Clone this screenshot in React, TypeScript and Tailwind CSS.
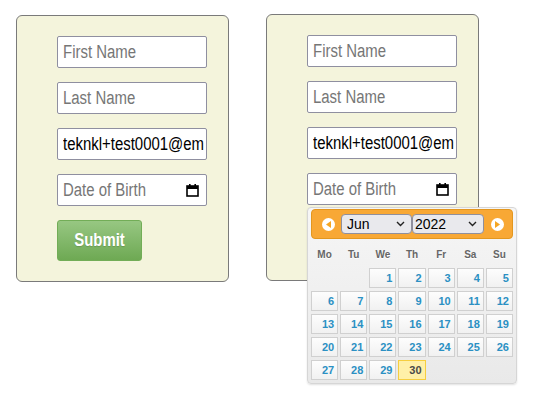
const sans = "font-['Liberation_Sans',Arial,sans-serif]";

// Arial Narrow isn't installed; Liberation Sans squeezed horizontally gives the same glyphs
function Narrow({ children, className = '' }: { children: React.ReactNode; className?: string }) {
  return <span className={`inline-block origin-left scale-x-[0.83] whitespace-nowrap ${className}`}>{children}</span>;
}

function CalendarIcon() {
  return (
    <svg className="h-[14px] w-[13px] shrink-0" viewBox="0 0 13 14" fill="none">
      <rect x="1" y="3" width="11" height="10" stroke="#000" strokeWidth="1.6" />
      <rect x="1" y="3" width="11" height="3" fill="#000" />
      <rect x="3" y="1" width="1.6" height="3" fill="#000" />
      <rect x="8.4" y="1" width="1.6" height="3" fill="#000" />
    </svg>
  );
}

function Field({ text, filled, icon }: { text: string; filled?: boolean; icon?: boolean }) {
  return (
    <div
      className={`flex h-8 w-[150px] items-center justify-between overflow-hidden rounded-[2px] border border-[#8f8fa0] bg-white pl-[5px] pr-[7px] text-[18px] ${sans} ${
        filled ? 'text-black' : 'text-[#767676]'
      }`}
    >
      <Narrow>{text}</Narrow>
      {icon && <CalendarIcon />}
    </div>
  );
}

function Chevron() {
  return (
    <svg className="h-[6px] w-[9px]" viewBox="0 0 9 6" fill="none">
      <path d="M1 1l3.5 3.5L8 1" stroke="#222" strokeWidth="1.4" />
    </svg>
  );
}

function NavButton({ dir }: { dir: 'prev' | 'next' }) {
  return (
    <div className="flex h-[13px] w-[13px] items-center justify-center rounded-full bg-white">
      <svg className="h-[7px] w-[5px]" viewBox="0 0 5 7">
        {dir === 'prev' ? <path d="M5 0v7L0 3.5z" fill="#f5a623" /> : <path d="M0 0v7l5-3.5z" fill="#f5a623" />}
      </svg>
    </div>
  );
}

function Datepicker() {
  const names = ['Mo', 'Tu', 'We', 'Th', 'Fr', 'Sa', 'Su'];
  const cells: (number | null)[] = [null, null, ...Array.from({ length: 30 }, (_, i) => i + 1)];
  return (
    <div className={`absolute left-0 top-[34px] z-10 w-[210px] rounded-[4px] border border-[#d6d6d6] bg-gradient-to-b from-[#f6f6f6] to-[#e9e9e9] px-[3px] pb-[3px] pt-px shadow-[0_1px_2px_rgba(0,0,0,0.12)] ${sans}`}>
      <div className="flex h-[30px] items-center rounded-[4px] border border-[#e3971f] bg-[#f8a835] pl-[10px] pr-[8px]">
        <NavButton dir="prev" />
        <div className="ml-[6px] flex h-[20px] w-[71px] items-center justify-between rounded-[4px] border border-[#8f8f9d] bg-[#e9e9ed] pl-[5px] pr-[6px] text-[14px] text-black">
          <span>Jun</span>
          <Chevron />
        </div>
        <div className="flex h-[20px] w-[72px] items-center justify-between rounded-[4px] border border-[#8f8f9d] bg-[#e9e9ed] pl-[2px] pr-[6px] text-[14px] text-black">
          <span>2022</span>
          <Chevron />
        </div>
        <div className="ml-auto">
          <NavButton dir="next" />
        </div>
      </div>
      <div className="mt-[8px] grid w-[202px] grid-cols-7 gap-x-[2px] text-[10px] font-bold text-[#666]">
        {names.map((n) => (
          <div key={n} className="h-[14px] text-center [text-shadow:0_1px_0_#fff]">
            {n}
          </div>
        ))}
      </div>
      <div className="mt-[7px] grid w-[202px] grid-cols-7 gap-x-[2px] gap-y-[3px] text-[11px] font-bold">
        {cells.map((d, i) =>
          d === null ? (
            <div key={i} className="h-[20px]" />
          ) : d === 30 ? (
            <div key={i} className="flex h-[20px] items-center justify-end border border-[#f6ce3f] bg-[#fff0a8] pr-[3px] text-[#4a4a4a]">
              {d}
            </div>
          ) : (
            <div key={i} className="flex h-[20px] items-center justify-end border border-[#d0d0d0] bg-gradient-to-b from-[#fdfdfd] to-[#f1f1f1] pr-[3px] text-[#2b90c3]">
              {d}
            </div>
          )
        )}
      </div>
    </div>
  );
}

function Card({ open }: { open?: boolean }) {
  return (
    <div className="flex h-[267px] w-[213px] flex-col gap-[14px] rounded-[6px] border border-[#7a7a7a] bg-[#f4f4dc] pl-[40px] pt-[20px]">
      <Field text="First Name" />
      <Field text="Last Name" />
      <Field text="teknkl+test0001@em" filled />
      <div className="relative">
        <Field text="Date of Birth" icon />
        {open && <Datepicker />}
      </div>
      {!open && (
        <button
          className={`flex h-[41px] w-[85px] items-center justify-center rounded-[3px] border border-[#72ad57] bg-gradient-to-b from-[#97c782] to-[#6ea953] text-[18px] font-bold text-white [text-shadow:0_1px_1px_rgba(0,0,0,0.15)] ${sans}`}
        >
          <span className="inline-block scale-x-[0.83]">Submit</span>
        </button>
      )}
    </div>
  );
}

export default function App() {
  return (
    <div className="flex min-h-[405px] w-[534px] items-start gap-[37px] bg-white pl-[16px]">
      <div className="mt-[15px]">
        <Card />
      </div>
      <div className="mt-[14px]">
        <Card open />
      </div>
    </div>
  );
}
